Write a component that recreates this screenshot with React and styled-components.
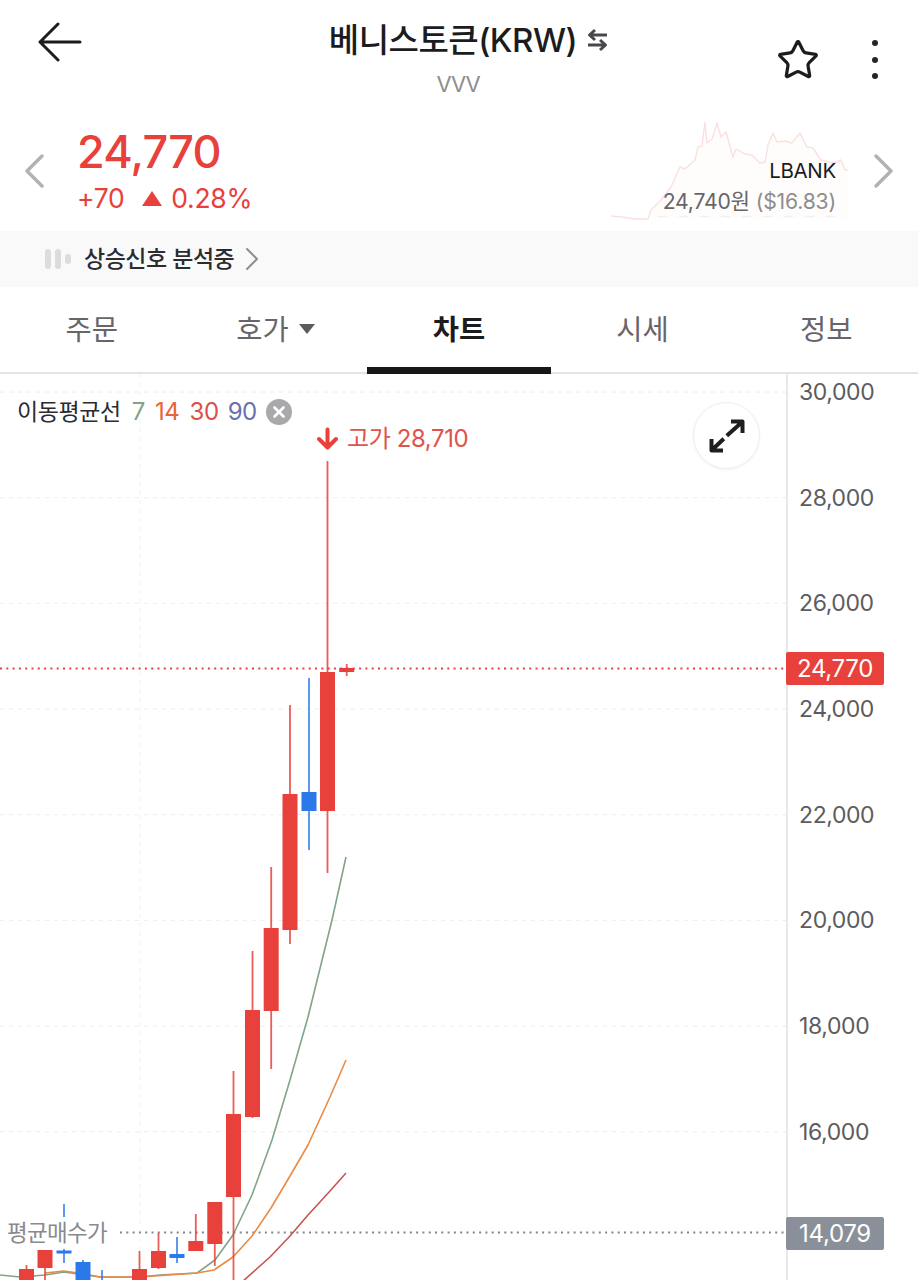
import React from 'react'
import styled, { createGlobalStyle } from 'styled-components'
import { Star } from 'lucide-react'

const RED = '#e8403a'
const BLUE = '#2b78e8'

const GlobalStyle = createGlobalStyle`
  html, body {
    margin: 0;
    padding: 0;
    background: #fff;
  }
  * {
    box-sizing: border-box;
  }
`

const Page = styled.div`
  width: 918px;
  height: 1280px;
  overflow: hidden;
  background: #fff;
  color: #1c1c1e;
  font-family: Inter, 'Noto Sans CJK KR', sans-serif;
`

const Header = styled.header`
  height: 118px;
  display: grid;
  grid-template-columns: 1fr auto 1fr;
  padding: 19px 40px 0 38px;
`

const BackButton = styled.div`
  height: 42px;
  margin-top: 2px;
`

const TitleBlock = styled.div`
  display: flex;
  flex-direction: column;
  align-items: center;
`

const TitleRow = styled.div`
  display: flex;
  align-items: center;
  gap: 10px;
  height: 42px;
  margin-left: 21px;
`

const Title = styled.h1`
  margin: 0;
  font-size: 33px;
  font-weight: 500;
  letter-spacing: -0.5px;
  line-height: 42px;
  white-space: nowrap;
`

const Ticker = styled.div`
  margin-top: 3px;
  font-size: 22px;
  line-height: 40px;
  letter-spacing: -1px;
  color: #8d8d8f;
`

const HeaderActions = styled.div`
  display: flex;
  justify-content: flex-end;
  align-items: flex-start;
  gap: 52px;
`

const StarButton = styled.div`
  height: 44px;
  margin-top: 19px;
  color: #1c1c1e;
`

const Kebab = styled.div`
  display: flex;
  flex-direction: column;
  gap: 10.5px;
  padding-top: 21px;
  span {
    width: 6px;
    height: 6px;
    border-radius: 50%;
    background: #26262a;
  }
`

const PriceRow = styled.section`
  position: relative;
  height: 113px;
  display: flex;
  align-items: flex-start;
  padding: 0 24px;
`

const NavChevron = styled.svg`
  flex: none;
  margin-top: 36px;
`

const PriceBlock = styled.div`
  margin-left: 33px;
  color: ${RED};
`

const Price = styled.div`
  font-size: 45px;
  font-weight: 500;
  line-height: 56px;
  letter-spacing: -0.8px;
  margin-top: 6px;
`

const Change = styled.div`
  display: flex;
  align-items: center;
  font-size: 26.5px;
  line-height: 36px;
  margin-top: 0;
  letter-spacing: -0.3px;
`

const UpTriangle = styled.i`
  width: 0;
  height: 0;
  margin: 0 9px 0 18px;
  border-left: 10px solid transparent;
  border-right: 10px solid transparent;
  border-bottom: 15px solid ${RED};
`

const Exchange = styled.div`
  position: relative;
  margin-left: auto;
  margin-right: 38px;
  padding-top: 38px;
  text-align: right;
  z-index: 1;
`

const ExchangeName = styled.div`
  font-size: 20.5px;
  line-height: 30px;
  letter-spacing: -0.3px;
`

const ExchangePrice = styled.div`
  font-size: 21.2px;
  line-height: 30px;
  letter-spacing: -0.2px;
  color: #66666a;
  white-space: nowrap;
  span {
    color: #8d8d8f;
  }
`

const Sparkline = styled.svg`
  position: absolute;
  left: 600px;
  top: 0;
`

const SignalBar = styled.div`
  height: 56px;
  display: flex;
  align-items: center;
  padding-left: 45px;
  background: #f9f9f9;
`

const SignalBars = styled.div`
  display: flex;
  align-items: center;
  gap: 4px;
  margin-right: 13px;
`

const SignalTick = styled.i`
  width: 6px;
  height: ${p => p.$height}px;
  border-radius: 3px;
  background: #dcdcdc;
`

const SignalLabel = styled.span`
  font-size: 23px;
  font-weight: 500;
  letter-spacing: -0.5px;
  color: #2c2c30;
  margin-right: 11px;
  padding-bottom: 4px;
`

const Tabs = styled.nav`
  height: 87px;
  display: grid;
  grid-template-columns: repeat(5, 1fr);
  border-bottom: 2px solid #e4e4e4;
`

const Tab = styled.div`
  position: relative;
  display: flex;
  justify-content: center;
  align-items: center;
  gap: 10px;
  padding-bottom: 4px;
  font-size: 28.5px;
  font-weight: ${p => (p.$active ? 700 : 400)};
  color: ${p => (p.$active ? '#1c1c1e' : '#66666a')};
  &::after {
    content: '';
    display: ${p => (p.$active ? 'block' : 'none')};
    position: absolute;
    left: 0;
    right: 0;
    bottom: -2px;
    height: 7px;
    background: #17171a;
  }
`

const DownCaret = styled.i`
  width: 0;
  height: 0;
  margin-top: 2px;
  border-left: 8px solid transparent;
  border-right: 8px solid transparent;
  border-top: 10px solid #5c5c60;
`

const Chart = styled.section`
  position: relative;
  height: 906px;
  display: flex;
  overflow: hidden;
`

const Plot = styled.div`
  position: relative;
  width: 788px;
  flex: none;
  border-right: 2px solid #e8e8e8;
  svg {
    display: block;
  }
`

const Axis = styled.div`
  display: flex;
  flex-direction: column;
  padding-left: 11px;
`

const AxisLabel = styled.div`
  height: 105.67px;
  flex: none;
  font-size: 23px;
  line-height: 36px;
  letter-spacing: -0.4px;
  color: #5c5c60;
`

const Legend = styled.div`
  position: absolute;
  left: 17px;
  top: 22px;
  display: flex;
  align-items: center;
  font-size: 23px;
  line-height: 32px;
  letter-spacing: -0.4px;
  color: #2c2c30;
`

const LegendValue = styled.span`
  margin-left: ${p => p.$gap}px;
  color: ${p => p.$color};
  font-size: 24px;
`

const LegendClose = styled.svg`
  margin-left: 9px;
`

const HighMark = styled.div`
  position: absolute;
  left: 316px;
  top: 49px;
  display: flex;
  align-items: center;
  gap: 8px;
  font-size: 24px;
  line-height: 32px;
  letter-spacing: -0.4px;
  color: #e0524c;
`

const ExpandButton = styled.div`
  position: absolute;
  left: 693px;
  top: 28px;
  width: 67px;
  height: 67px;
  display: flex;
  align-items: center;
  justify-content: center;
  border-radius: 50%;
  background: #fff;
  border: 1.5px solid #eeeeee;
  box-shadow: 0 1px 3px rgba(0, 0, 0, 0.05);
`

const AverageLabel = styled.div`
  position: absolute;
  left: 0;
  top: 843px;
  padding: 0 12px 0 7px;
  background: #fff;
  font-size: 22.5px;
  line-height: 32px;
  letter-spacing: -0.7px;
  color: #8a8a8e;
`

const PriceTag = styled.div`
  position: absolute;
  left: 786px;
  top: ${p => p.$top}px;
  width: 98px;
  height: 33px;
  display: flex;
  align-items: center;
  justify-content: center;
  background: ${p => p.$color};
  border-radius: 2px;
  font-size: 24px;
  letter-spacing: -0.3px;
  color: #fff;
`

// [center x, body top, body bottom, wick top, wick bottom, colour], in page pixels
const candles = [
  [26.5, 1269, 1290, 1265, 1290, RED],
  [45, 1250, 1268, 1250, 1290, RED],
  [64, 1250.5, 1253.5, 1204, 1263, BLUE],
  [83, 1262, 1290, 1260, 1290, BLUE],
  [102, 1285, 1290, 1270, 1290, BLUE],
  [139.5, 1269, 1290, 1251, 1290, RED],
  [158.5, 1251, 1268, 1233, 1269, RED],
  [177, 1254, 1258, 1237, 1263, BLUE],
  [195.8, 1241, 1251, 1214, 1251, RED],
  [214.8, 1202, 1244, 1202, 1266, RED],
  [233.5, 1114, 1197, 1071, 1290, RED],
  [252.5, 1010, 1117, 951, 1118, RED],
  [271.2, 928, 1011, 867, 1069, RED],
  [290, 794, 930, 705, 944, RED],
  [309, 792, 811, 678, 850, BLUE],
  [327.5, 672, 811, 461, 873, RED],
  [346.7, 668, 672, 664, 676, RED]
]

const averages = [
  {
    color: '#7fa487',
    points:
      '0,1275 20,1277 45,1275 64,1272 85,1275 100,1277 140,1277 160,1275 197,1273 215,1260 233,1235 252,1195 272,1140 290,1080 308,1017 332,920 346,857'
  },
  {
    color: '#e98a45',
    points:
      '45,1273 64,1271 85,1274 100,1277 140,1277 197,1273 214,1270 233,1257 252,1236 271,1208 290,1176 308,1145 330,1097 346,1060'
  },
  {
    color: '#c9554f',
    points: '242,1282 270,1257 290,1236 308,1215 330,1191 346,1173'
  }
]

const spark =
  '611,216 622,217 635,219 648,219 651,210 661,200 671,187 680,167 685,169 695,160 698,147 702,146 705,122 707,143 712,139 717,123 721,137 726,132 731,150 733,157 736,149 745,154 752,155 760,163 765,162 768,145 773,133 777,142 785,141 792,143 800,133 807,147 813,148 821,160 832,163 836,162 841,160 845,170 848,170'

const axisValues = ['30,000', '28,000', '26,000', '24,000', '22,000', '20,000', '18,000', '16,000']

const Chevron = ({ flip }) => (
  <NavChevron width="20" height="34" viewBox="0 0 20 34" fill="none">
    <path
      d={flip ? 'M2 2 L17 17 L2 32' : 'M18 2 L3 17 L18 32'}
      stroke="#b2b2b2"
      strokeWidth="3.4"
      strokeLinecap="round"
      strokeLinejoin="round"
    />
  </NavChevron>
)

const ChartDrawing = () => (
  <svg width="786" height="906" viewBox="0 374 786 906" fill="none">
    {[392, 497.67, 603.33, 709, 814.67, 920.33, 1026, 1131.67].map(y => (
      <line key={y} x1="0" x2="786" y1={y} y2={y} stroke="#ececec" strokeWidth="1" strokeDasharray="4 5" />
    ))}
    <line x1="140" x2="140" y1="374" y2="1280" stroke="#f1f1f1" strokeWidth="1" strokeDasharray="4 5" />
    <line x1="120" x2="786" y1="1232.5" y2="1232.5" stroke="#85858a" strokeWidth="2" strokeDasharray="2 4.3" />
    <line x1="0" x2="786" y1="668.5" y2="668.5" stroke={RED} strokeWidth="2" strokeDasharray="2 4.3" />
    {averages.map(a => (
      <polyline key={a.color} points={a.points} stroke={a.color} strokeWidth="1.6" strokeLinejoin="round" />
    ))}
    {candles.map(([x, top, bottom, wickTop, wickBottom, color]) => (
      <g key={x}>
        <line x1={x} x2={x} y1={wickTop} y2={wickBottom} stroke={color} strokeWidth="1.8" opacity="0.85" />
        <rect x={x - 7.5} y={top} width="15" height={bottom - top} fill={color} />
      </g>
    ))}
  </svg>
)

export default function App() {
  return (
    <Page>
      <GlobalStyle />
      <Header>
        <BackButton>
          <svg width="44" height="42" viewBox="0 0 44 42" fill="none">
            <path
              d="M42 21 H3 M20 3 L2 21 L20 39"
              stroke="#1c1c1e"
              strokeWidth="3"
              strokeLinecap="round"
              strokeLinejoin="round"
            />
          </svg>
        </BackButton>
        <TitleBlock>
          <TitleRow>
            <Title>베니스토큰(KRW)</Title>
            <svg width="21" height="24" viewBox="0 0 21 24" fill="none">
              <path
                d="M20 7 H3 M8 2 L2.5 7 L8 12 M1 17 H18 M13 12 L18.5 17 L13 22"
                stroke="#48484c"
                strokeWidth="3"
                strokeLinejoin="round"
              />
            </svg>
          </TitleRow>
          <Ticker>VVV</Ticker>
        </TitleBlock>
        <HeaderActions>
          <StarButton>
            <Star size={44} strokeWidth={1.75} />
          </StarButton>
          <Kebab>
            <span />
            <span />
            <span />
          </Kebab>
        </HeaderActions>
      </Header>

      <PriceRow>
        <Sparkline width="260" height="113" viewBox="600 118 260 113" fill="none">
          <polygon points={`${spark} 848,218 611,218`} fill="#fffcfc" />
          <polyline points={spark} stroke="#fbe0e0" strokeWidth="1.4" strokeLinejoin="round" />
          <line x1="658" x2="840" y1="216.5" y2="216.5" stroke="#f0f0f0" strokeWidth="1.5" strokeDasharray="9 12" />
        </Sparkline>
        <Chevron />
        <PriceBlock>
          <Price>24,770</Price>
          <Change>
            +70
            <UpTriangle />
            0.28%
          </Change>
        </PriceBlock>
        <Exchange>
          <ExchangeName>LBANK</ExchangeName>
          <ExchangePrice>
            24,740원 <span>($16.83)</span>
          </ExchangePrice>
        </Exchange>
        <Chevron flip />
      </PriceRow>

      <SignalBar>
        <SignalBars>
          <SignalTick $height={20} />
          <SignalTick $height={20} />
          <SignalTick $height={10} />
        </SignalBars>
        <SignalLabel>상승신호 분석중</SignalLabel>
        <svg width="14" height="24" viewBox="0 0 14 24" fill="none">
          <path d="M2 2 L12 12 L2 22" stroke="#8e8e92" strokeWidth="2" strokeLinecap="round" strokeLinejoin="round" />
        </svg>
      </SignalBar>

      <Tabs>
        <Tab>주문</Tab>
        <Tab>
          호가
          <DownCaret />
        </Tab>
        <Tab $active>차트</Tab>
        <Tab>시세</Tab>
        <Tab>정보</Tab>
      </Tabs>

      <Chart>
        <Plot>
          <ChartDrawing />
          <Legend>
            이동평균선
            <LegendValue $gap={11} $color="#7fa487">7</LegendValue>
            <LegendValue $gap={10} $color="#e8643a">14</LegendValue>
            <LegendValue $gap={10} $color="#dd5048">30</LegendValue>
            <LegendValue $gap={9} $color="#6a6fae">90</LegendValue>
            <LegendClose width="26" height="26" viewBox="0 0 26 26">
              <circle cx="13" cy="13" r="13" fill="#a9a9ab" />
              <path d="M8.5 8.5 L17.5 17.5 M17.5 8.5 L8.5 17.5" stroke="#fff" strokeWidth="2.6" strokeLinecap="round" />
            </LegendClose>
          </Legend>
          <HighMark>
            <svg width="23" height="24" viewBox="0 0 23 24" fill="none">
              <path
                d="M11.5 2.5 V20 M3 12 L11.5 20.5 L20 12"
                stroke="#e8403a"
                strokeWidth="4"
                strokeLinecap="round"
                strokeLinejoin="round"
              />
            </svg>
            고가 28,710
          </HighMark>
          <ExpandButton>
            <svg width="38" height="36" viewBox="0 0 38 36" fill="none">
              <path
                d="M23 3.5 H34.5 V15 M3.5 21 V32.5 H15 M5 31 L15.8 20.8 M18.8 17.8 L33 5"
                stroke="#1f1f22"
                strokeWidth="4"
                strokeLinecap="butt"
                strokeLinejoin="round"
              />
            </svg>
          </ExpandButton>
          <AverageLabel>평균매수가</AverageLabel>
        </Plot>
        <Axis>
          {axisValues.map(v => (
            <AxisLabel key={v}>{v}</AxisLabel>
          ))}
        </Axis>
        <PriceTag $top={278} $color="#e8403a">24,770</PriceTag>
        <PriceTag $top={843} $color="#8a9099">14,079</PriceTag>
      </Chart>
    </Page>
  )
}
